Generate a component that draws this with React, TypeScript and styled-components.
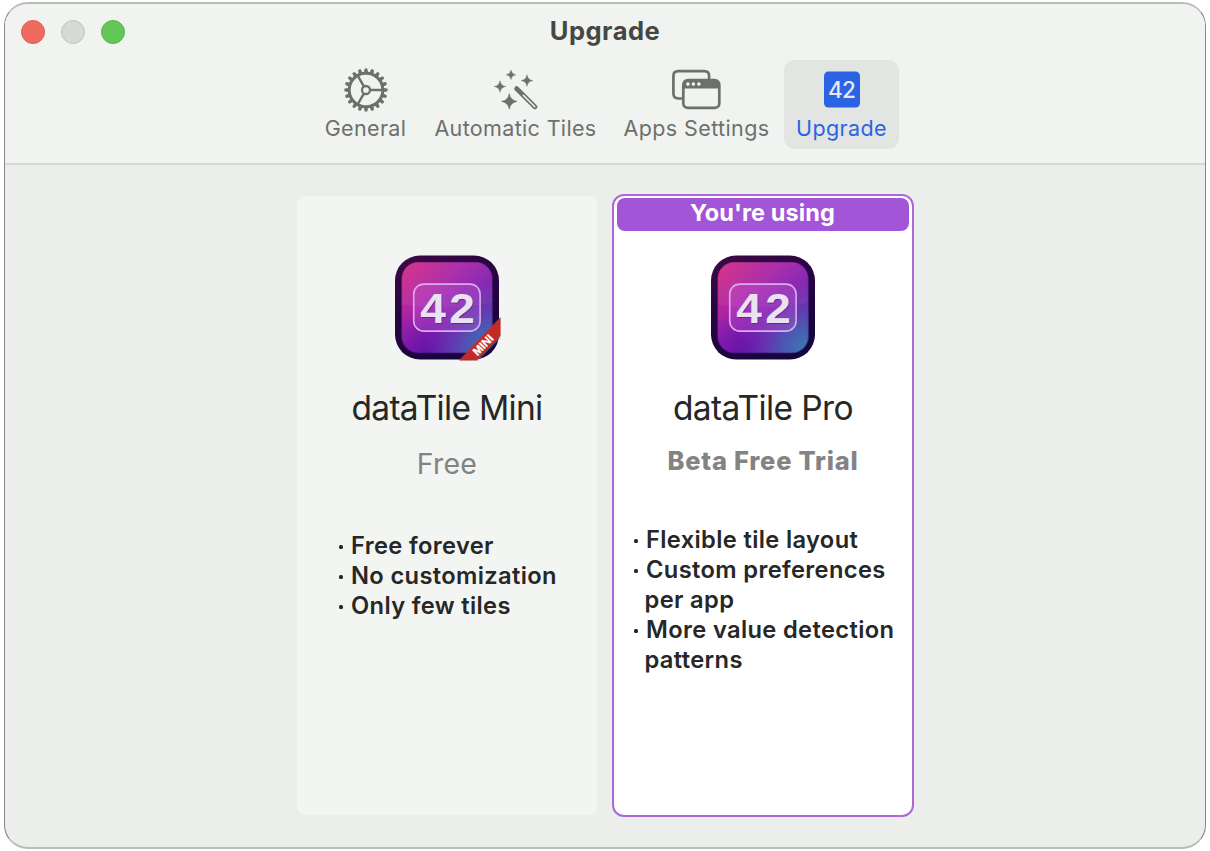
import React from "react";
import styled, { createGlobalStyle } from "styled-components";

const GlobalStyle = createGlobalStyle`
  * { box-sizing: border-box; }
  body {
    margin: 0;
    background: #ffffff;
    font-family: Inter, "Liberation Sans", sans-serif;
    -webkit-font-smoothing: antialiased;
  }
`;

const Desktop = styled.div`
  width: 1210px;
  height: 851px;
  padding: 2px 4px 2px 4px;
  overflow: hidden;
`;

const Window = styled.main`
  display: flex;
  flex-direction: column;
  width: 1202px;
  height: 847px;
  border: 1px solid #868886;
  border-top: 2px solid #b9bbb9;
  border-bottom: 2px solid #b9bbb9;
  border-radius: 24px;
  background: #eceeeb;
  overflow: hidden;
`;

const Header = styled.header`
  flex: none;
  height: 161px;
  border-bottom: 2px solid #d6d8d5;
  background: #f0f3f0;
`;

const TitleBar = styled.div`
  display: grid;
  grid-template-columns: 1fr auto 1fr;
  align-items: center;
  height: 56px;
  padding: 0 16px 1px;
`;

const Lights = styled.div`
  display: flex;
  gap: 16px;
`;

const Light = styled.span<{ $fill: string; $ring: string }>`
  width: 24px;
  height: 24px;
  border: 1px solid ${(p) => p.$ring};
  border-radius: 50%;
  background: ${(p) => p.$fill};
`;

const Title = styled.h1`
  margin: -2px 0 0;
  color: #454745;
  font-size: 25.5px;
  font-weight: 700;
  letter-spacing: 0.5px;
  line-height: 30px;
`;

const Toolbar = styled.nav`
  display: flex;
  justify-content: center;
  gap: 3px;
`;

const Tab = styled.button<{ $width: number; $active?: boolean; $tracking: number }>`
  display: flex;
  flex-direction: column;
  align-items: center;
  width: ${(p) => p.$width}px;
  height: 89px;
  padding: 6px 0 0 1px;
  border: 0;
  border-radius: 11px;
  background: ${(p) => (p.$active ? "#e3e5e2" : "transparent")};
  color: ${(p) => (p.$active ? "#2b64e3" : "#6d706d")};
  font-family: inherit;
  font-size: 21.5px;
  letter-spacing: ${(p) => p.$tracking}px;
  line-height: 28px;
  white-space: nowrap;
`;

const Glyph = styled.svg`
  display: block;
  flex: none;
`;

const Plans = styled.section`
  display: flex;
  justify-content: center;
  align-items: center;
  gap: 15px;
  padding-top: 29px;
`;

const Card = styled.article<{ $current?: boolean }>`
  display: flex;
  flex-direction: column;
  align-items: center;
  width: ${(p) => (p.$current ? 302 : 300)}px;
  height: ${(p) => (p.$current ? 623 : 619)}px;
  padding: ${(p) => (p.$current ? "2px 3px" : "1px 0 0")};
  border: ${(p) => (p.$current ? "2px solid #ac68da" : "0")};
  border-radius: ${(p) => (p.$current ? 12 : 8)}px;
  background: ${(p) => (p.$current ? "#ffffff" : "#f3f5f2")};
`;

const BannerSlot = styled.div`
  flex: none;
  width: 100%;
  height: 55px;
`;

const MiniSpacer = styled(BannerSlot)`
  height: 56px;
`;

const Banner = styled.div`
  height: 32.5px;
  border-radius: 8px;
  background: #a255d7;
  color: #ffffff;
  font-size: 23.5px;
  font-weight: 700;
  letter-spacing: 0.1px;
  line-height: 30px;
  text-align: center;
`;

const Name = styled.h2<{ $tracking: number }>`
  margin: 27px 0 0 1px;
  color: #262726;
  font-size: 33.5px;
  font-weight: 400;
  letter-spacing: ${(p) => p.$tracking}px;
  line-height: 40px;
  white-space: nowrap;
`;

const Price = styled.p<{ $bold?: boolean }>`
  margin: ${(p) => (p.$bold ? "17px 0 0 1px" : "18px 0 0 1px")};
  color: #828382;
  font-size: ${(p) => (p.$bold ? 25.5 : 28.5)}px;
  font-weight: ${(p) => (p.$bold ? 800 : 400)};
  letter-spacing: ${(p) => (p.$bold ? 0.75 : 0.2)}px;
  line-height: ${(p) => (p.$bold ? 32 : 36)}px;
  white-space: nowrap;
`;

const Features = styled.ul<{ $top: number; $left: number }>`
  align-self: flex-start;
  margin: ${(p) => p.$top}px 0 0 ${(p) => p.$left}px;
  padding: 0;
  list-style: none;
  color: #262726;
  font-size: 23.7px;
  font-weight: 600;
  line-height: 30px;
`;

const Feature = styled.li`
  display: flex;
  letter-spacing: 0.35px;
  white-space: nowrap;

  &::before {
    content: "";
    flex: none;
    width: 4px;
    height: 4px;
    margin: 14px 8.5px 0 0;
    border-radius: 1.5px;
    background: #262726;
  }
`;

const Wrapped = styled.span`
  display: block;
  margin-left: -1.5px;
`;

const GearIcon = () => {
  const teeth = Array.from({ length: 20 }, (_, i) => i * 18);
  return (
    <Glyph width="48" height="48" viewBox="-24 -24 48 48" fill="none" stroke="currentColor">
      <circle r="16.8" strokeWidth="3" />
      {teeth.map((a) => (
        <path key={a} d="M17.3-2.1L21.3-1.4Q22.2 0 21.3 1.4L17.3 2.1Z" fill="currentColor" stroke="none" transform={`rotate(${a})`} />
      ))}
      <circle r="4" strokeWidth="2.3" />
      {[0, 120, 240].map((a) => (
        <path key={a} d="M4.5 0H17" strokeWidth="2.4" transform={`rotate(${a})`} />
      ))}
    </Glyph>
  );
};

const star = (x: number, y: number, r: number) => {
  const k = r * 0.14;
  return `M${x} ${y - r}Q${x + k} ${y - k} ${x + r} ${y}Q${x + k} ${y + k} ${x} ${y + r}Q${x - k} ${y + k} ${x - r} ${y}Q${x - k} ${y - k} ${x} ${y - r}Z`;
};

const WandIcon = () => (
  <Glyph width="48" height="48" viewBox="491.5 66 48 48" fill="currentColor">
    <path d={star(510.5, 74.8, 4.8)} stroke="currentColor" strokeWidth=".4" />
    <path d={star(526.5, 80.6, 5.8)} stroke="currentColor" strokeWidth=".4" />
    <path d={star(499.5, 86.5, 5.8)} stroke="currentColor" strokeWidth=".4" />
    <path d={star(508.8, 101.4, 7.8)} stroke="currentColor" strokeWidth=".5" />
    <path d="M516 88.5L534.6 107" fill="none" stroke="currentColor" strokeWidth="4.6" strokeLinecap="round" />
    <path d="M522.8 95.2L534.3 106.7" fill="none" stroke="#f0f3f0" strokeWidth="1.5" strokeLinecap="round" />
  </Glyph>
);

const WindowsIcon = () => (
  <Glyph width="50" height="48" viewBox="672 66 50 48" fill="none" stroke="currentColor">
    <path d="M682 98.5H678.3Q673.4 98.5 673.4 93.6V76Q673.4 71.2 678.3 71.2H704.2Q709.1 71.2 709.1 76V79" strokeWidth="2.7" />
    <rect x="683.3" y="80.2" width="36" height="27.6" rx="4.6" strokeWidth="2.7" />
    <path d="M683 88.5V84Q683 80 687 80H715.5Q719.5 80 719.5 84V88.5Z" fill="currentColor" stroke="none" />
    <g fill="#f0f3f0" stroke="none">
      <circle cx="687.9" cy="84.1" r="1.8" />
      <circle cx="693.4" cy="84.1" r="1.8" />
      <circle cx="698.9" cy="84.1" r="1.8" />
    </g>
  </Glyph>
);

const BadgeIcon = () => (
  <Glyph width="48" height="48" viewBox="0 0 48 48">
    <rect x="6" y="5.5" width="36" height="36" rx="4.5" fill="#2b64e3" />
    <text x="23.6" y="31.8" textAnchor="middle" fill="#e3e8f2" fontFamily="Inter, sans-serif" fontSize="22.5" fontWeight="500" letterSpacing="-0.7">42</text>
  </Glyph>
);

const AppIcon = ({ mini }: { mini?: boolean }) => {
  const id = mini ? "mini" : "pro";
  return (
    <Glyph width="108" height="108" viewBox="0 -0.5 108 108">
      <defs>
        <linearGradient id={`${id}-rim`} x1="0" y1="0" x2="0.5" y2="1">
          <stop offset="0" stopColor="#3d0a45" />
          <stop offset="0.5" stopColor="#260541" />
          <stop offset="1" stopColor="#17053d" />
        </linearGradient>
        <linearGradient id={`${id}-face`} x1="0" y1="0" x2="1" y2="1">
          <stop offset="0.06" stopColor="#d02b86" />
          <stop offset="0.35" stopColor="#a824a8" />
          <stop offset="0.6" stopColor="#7e1fae" />
          <stop offset="1" stopColor="#4b3aa8" />
        </linearGradient>
        <radialGradient id={`${id}-blue`} cx="0.97" cy="0.95" r="0.75">
          <stop offset="0" stopColor="#3c7cb2" />
          <stop offset="0.35" stopColor="#4a5cb4" stopOpacity="0.85" />
          <stop offset="1" stopColor="#7a28b0" stopOpacity="0" />
        </radialGradient>
        <radialGradient id={`${id}-violet`} cx="0.3" cy="1" r="0.5">
          <stop offset="0" stopColor="#6412a6" />
          <stop offset="1" stopColor="#6c14ab" stopOpacity="0" />
        </radialGradient>
        <clipPath id={`${id}-clip`}>
          <rect x="8.3" y="8.3" width="91.4" height="91.4" rx="17" />
        </clipPath>
      </defs>
      <rect x="2" y="2" width="104" height="104" rx="25" fill={`url(#${id}-rim)`} />
      <g clipPath={`url(#${id}-clip)`}>
        <rect x="8" y="8" width="92" height="92" fill={`url(#${id}-face)`} />
        <rect x="8" y="8" width="92" height="92" fill={`url(#${id}-violet)`} />
        <rect x="8" y="8" width="92" height="92" fill={`url(#${id}-blue)`} />
        <path d="M8 51Q55 58 100 49V8H8Z" fill="#ffffff" opacity="0.05" />
      </g>
      <rect x="8.3" y="8.3" width="91.4" height="91.4" rx="17" fill="none" stroke="#26054a" strokeOpacity="0.45" strokeWidth="1.6" />
      <rect x="20.7" y="30.6" width="66.4" height="47" rx="10" fill="#cf6ae0" fillOpacity="0.24" stroke="#dfa9ee" strokeWidth="1.6" />
      <g fontFamily="Liberation Sans, sans-serif" fontWeight="700" fontSize="43" letterSpacing="3.2">
        <text transform="translate(28.1 70.2) scale(1.07 1)" fill="#4d1777" opacity="0.6">42</text>
        <text transform="translate(27.2 69.2) scale(1.07 1)" fill="#e9e2f0">42</text>
      </g>
      {mini && (
        <g>
          <path d="M66 107.5L107.5 65V84.5L84.5 107.5Z" fill="#8b8190" opacity="0.55" />
          <path d="M66 106.7L107.5 63.5V82.2L83.8 106.7Z" fill="#c22a27" />
          <text transform="translate(84.5 102.7) rotate(-46)" fill="#ffffff" fontFamily="Liberation Sans, sans-serif" fontWeight="700" fontSize="11.3" stroke="#ffffff" strokeWidth=".3">MINI</text>
        </g>
      )}
    </Glyph>
  );
};

export default function App() {
  return (
    <Desktop>
      <GlobalStyle />
      <Window>
        <Header>
          <TitleBar>
            <Lights>
              <Light $fill="#ee6b60" $ring="#dc5d52" />
              <Light $fill="#d7d9d6" $ring="#c1c3c0" />
              <Light $fill="#62c756" $ring="#54b648" />
            </Lights>
            <Title>Upgrade</Title>
          </TitleBar>
          <Toolbar>
            <Tab $width={107} $tracking={0.35}><GearIcon />General</Tab>
            <Tab $width={187} $tracking={0.35}><WandIcon />Automatic Tiles</Tab>
            <Tab $width={169} $tracking={0.4}><WindowsIcon />Apps Settings</Tab>
            <Tab $width={115} $tracking={0.4} $active><BadgeIcon />Upgrade</Tab>
          </Toolbar>
        </Header>
        <Plans>
          <Card>
            <MiniSpacer />
            <AppIcon mini />
            <Name $tracking={-0.7}>dataTile Mini</Name>
            <Price>Free</Price>
            <Features $top={49} $left={42}>
              <Feature>Free forever</Feature>
              <Feature>No customization</Feature>
              <Feature>Only few tiles</Feature>
            </Features>
          </Card>
          <Card $current>
            <BannerSlot>
              <Banner>You're using</Banner>
            </BannerSlot>
            <AppIcon />
            <Name $tracking={-0.6}>dataTile Pro</Name>
            <Price $bold>Beta Free Trial</Price>
            <Features $top={48} $left={17}>
              <Feature>Flexible tile layout</Feature>
              <Feature><span>Custom preferences<Wrapped>per app</Wrapped></span></Feature>
              <Feature><span>More value detection<Wrapped>patterns</Wrapped></span></Feature>
            </Features>
          </Card>
        </Plans>
      </Window>
    </Desktop>
  );
}
